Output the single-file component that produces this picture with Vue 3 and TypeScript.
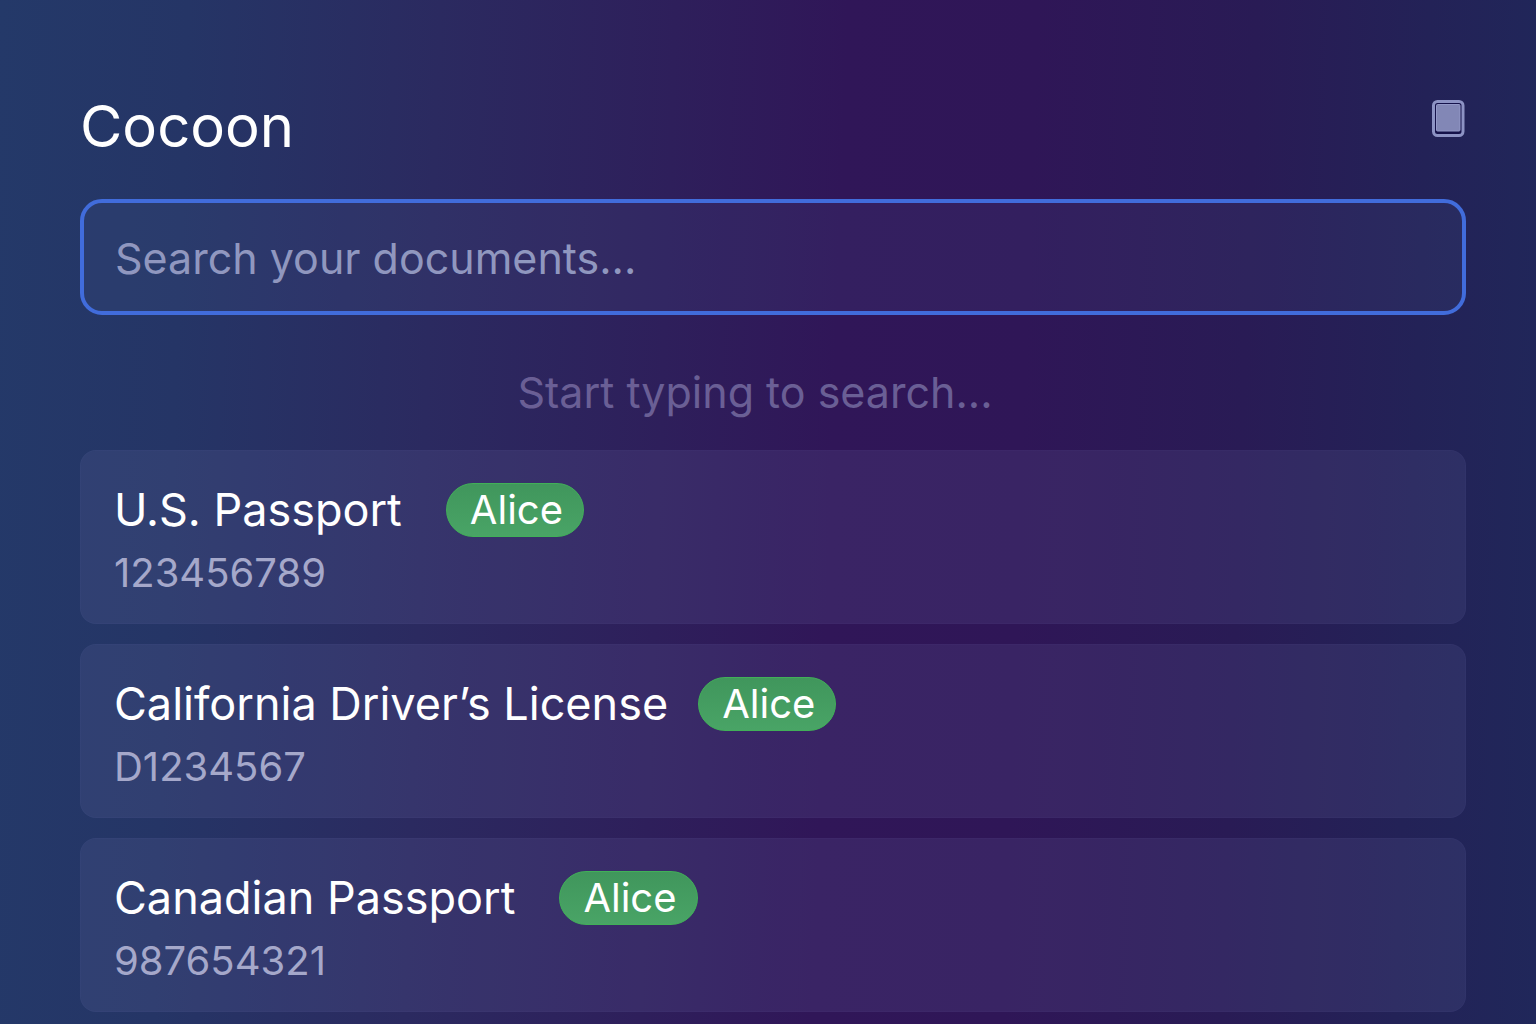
<script setup lang="ts">
import { ref } from 'vue'

interface DocumentEntry {
  id: number
  kind: 'passport' | 'license'
  title: string
  owner: string
  code: string
}

const query = ref('')

const documents: DocumentEntry[] = [
  { id: 1, kind: 'passport', title: 'U.S. Passport', owner: 'Alice', code: '123456789' },
  { id: 2, kind: 'license', title: 'California Driver’s License', owner: 'Alice', code: 'D1234567' },
  { id: 3, kind: 'passport', title: 'Canadian Passport', owner: 'Alice', code: '987654321' },
]
</script>

<template>
  <main class="app">
    <header class="header">
      <h1 class="brand">Cocoon</h1>
      <button class="window-button" type="button" aria-label="Toggle window">
        <svg viewBox="0 0 34 38" width="34" height="38" aria-hidden="true">
          <rect x="1.5" y="1.5" width="29.5" height="34" rx="4" fill="#15124a" stroke="#8d93c4" stroke-width="3" />
          <rect x="4.5" y="4.5" width="23.5" height="26.5" rx="1" fill="#8287b6" stroke="#9499c8" />
        </svg>
      </button>
    </header>

    <input
      v-model="query"
      class="search"
      type="text"
      placeholder="Search your documents..."
      aria-label="Search your documents"
    />

    <p class="hint">Start typing to search...</p>

    <ul class="results">
      <li v-for="doc in documents" :key="doc.id" class="card">
        <div class="card-head" :class="doc.kind">
          <h2 class="title">{{ doc.title }}</h2>
          <span class="owner">{{ doc.owner }}</span>
        </div>
        <p class="code">{{ doc.code }}</p>
      </li>
    </ul>
  </main>
</template>

<style>
body {
  margin: 0;
  background: #2a1c5a;
}
</style>

<style scoped>
.app {
  box-sizing: border-box;
  min-height: 100vh;
  padding: 88px 70px 12px 80px;
  background: linear-gradient(92deg, #243969 0%, #253566 12%, #2b2a60 28%, #2e1f5b 43%, #301658 54%, #2f1657 66%, #291b55 80%, #232257 91%, #20275a 100%);
  color: #fff;
  font-family: Inter, "Liberation Sans", sans-serif;
}

.header {
  display: flex;
  justify-content: space-between;
  align-items: flex-start;
  height: 111px;
}

.brand {
  margin: 0;
  font-size: 58px;
  line-height: 76px;
  font-weight: 400;
}

.window-button {
  display: block;
  margin: 12px 0 0;
  padding: 0;
  border: 0;
  background: none;
}

.window-button svg {
  display: block;
}

.search {
  display: block;
  box-sizing: border-box;
  width: 100%;
  height: 116px;
  padding: 2px 31px 0;
  border: 4px solid #416cdb;
  border-radius: 22px;
  outline: 0;
  background: rgba(90, 110, 165, 0.11);
  color: #fff;
  font: inherit;
  font-size: 43px;
}

.search::placeholder {
  color: #9097bf;
  opacity: 1;
}

.hint {
  margin: 49px 0 30px;
  padding-right: 36px;
  color: #6a5f95;
  font-size: 43px;
  line-height: 56px;
  text-align: center;
}

.results {
  display: flex;
  flex-direction: column;
  gap: 20px;
  margin: 0;
  padding: 0;
  list-style: none;
}

.card {
  box-sizing: border-box;
  padding: 32px 33px 24px;
  border: 1px solid rgba(150, 150, 220, 0.03);
  border-radius: 16px;
  background: rgba(135, 130, 190, 0.13);
}

.card-head {
  display: flex;
  align-items: center;
  gap: 30px;
}

.card-head.passport {
  gap: 44px;
}

.title {
  margin: 0;
  font-size: 45px;
  line-height: 54px;
  font-weight: 400;
}

.owner {
  box-sizing: border-box;
  padding: 0 20px 0 23px;
  border: 1px solid #41b058;
  border-radius: 27px;
  background: linear-gradient(#40965c, #49a466);
  font-size: 40px;
  line-height: 52px;
}

.code {
  margin: 10px 0 0;
  color: #a5a8ca;
  font-size: 40px;
  line-height: 52px;
}
</style>
